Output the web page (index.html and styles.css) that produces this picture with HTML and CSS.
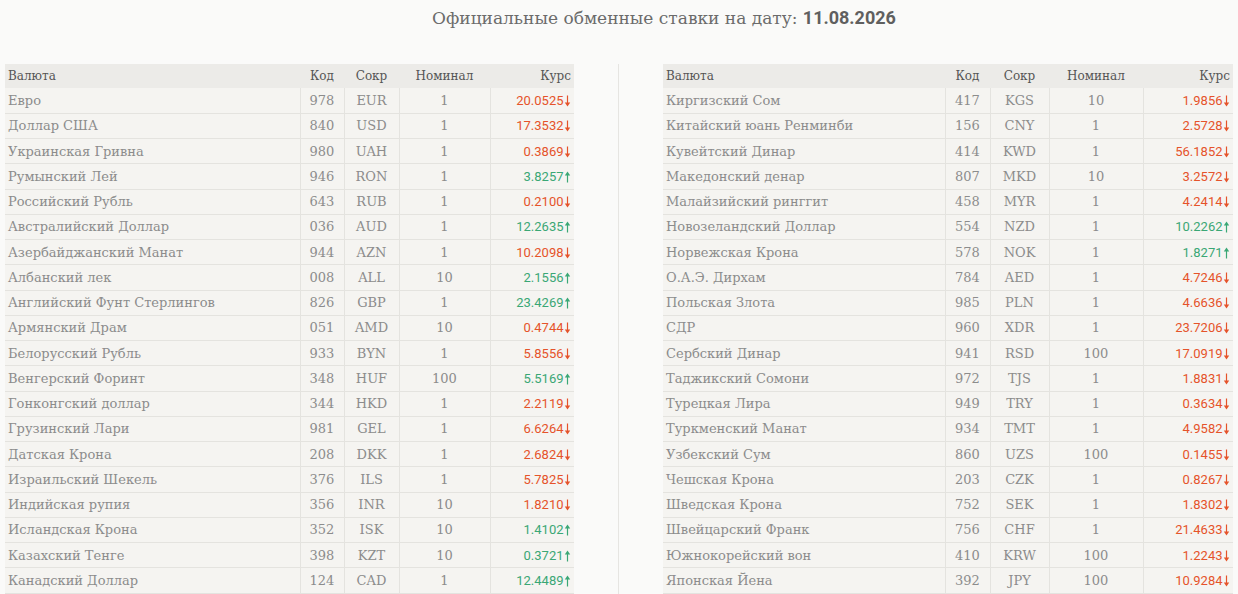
FILE: index.html
```html
<!DOCTYPE html>
<html lang="ru">
<head>
<meta charset="utf-8">
<title>Курсы валют</title>
<link rel="stylesheet" href="styles.css">
</head>
<body>
<svg class="defs" width="0" height="0" aria-hidden="true">
  <defs>
    <symbol id="dn" viewBox="0 0 7 12"><path d="M3.5 0.5V9" stroke="currentColor" stroke-width="1.2" fill="none"/><path d="M0.8 7.6H6.2L3.5 11.6Z" fill="currentColor"/></symbol>
    <symbol id="upa" viewBox="0 0 7 12"><path d="M3.5 3V11.5" stroke="currentColor" stroke-width="1.2" fill="none"/><path d="M0.8 4.4H6.2L3.5 0.4Z" fill="currentColor"/></symbol>
  </defs>
</svg>
<div class="page">
  <h1 class="title">Официальные обменные ставки на дату: <b>11.08.2026</b></h1>
  <div class="columns">
    <div class="col col-left">
      <table class="rates">
        <colgroup><col class="c-name-l"><col class="c-code-l"><col class="c-abbr-l"><col class="c-nom-l"><col class="c-rate-l"></colgroup>
        <thead><tr><th class="name">Валюта</th><th>Код</th><th>Сокр</th><th>Номинал</th><th class="rate">Курс</th></tr></thead>
        <tbody>
          <tr><td class="name">Евро</td><td>978</td><td>EUR</td><td>1</td><td class="rate down">20.0525<svg class="ar"><use href="#dn"/></svg></td></tr>
          <tr><td class="name">Доллар США</td><td>840</td><td>USD</td><td>1</td><td class="rate down">17.3532<svg class="ar"><use href="#dn"/></svg></td></tr>
          <tr><td class="name">Украинская Гривна</td><td>980</td><td>UAH</td><td>1</td><td class="rate down">0.3869<svg class="ar"><use href="#dn"/></svg></td></tr>
          <tr><td class="name">Румынский Лей</td><td>946</td><td>RON</td><td>1</td><td class="rate up">3.8257<svg class="ar"><use href="#upa"/></svg></td></tr>
          <tr><td class="name">Российский Рубль</td><td>643</td><td>RUB</td><td>1</td><td class="rate down">0.2100<svg class="ar"><use href="#dn"/></svg></td></tr>
          <tr><td class="name">Австралийский Доллар</td><td>036</td><td>AUD</td><td>1</td><td class="rate up">12.2635<svg class="ar"><use href="#upa"/></svg></td></tr>
          <tr><td class="name">Азербайджанский Манат</td><td>944</td><td>AZN</td><td>1</td><td class="rate down">10.2098<svg class="ar"><use href="#dn"/></svg></td></tr>
          <tr><td class="name">Албанский лек</td><td>008</td><td>ALL</td><td>10</td><td class="rate up">2.1556<svg class="ar"><use href="#upa"/></svg></td></tr>
          <tr><td class="name">Английский Фунт Стерлингов</td><td>826</td><td>GBP</td><td>1</td><td class="rate up">23.4269<svg class="ar"><use href="#upa"/></svg></td></tr>
          <tr><td class="name">Армянский Драм</td><td>051</td><td>AMD</td><td>10</td><td class="rate down">0.4744<svg class="ar"><use href="#dn"/></svg></td></tr>
          <tr><td class="name">Белорусский Рубль</td><td>933</td><td>BYN</td><td>1</td><td class="rate down">5.8556<svg class="ar"><use href="#dn"/></svg></td></tr>
          <tr><td class="name">Венгерский Форинт</td><td>348</td><td>HUF</td><td>100</td><td class="rate up">5.5169<svg class="ar"><use href="#upa"/></svg></td></tr>
          <tr><td class="name">Гонконгский доллар</td><td>344</td><td>HKD</td><td>1</td><td class="rate down">2.2119<svg class="ar"><use href="#dn"/></svg></td></tr>
          <tr><td class="name">Грузинский Лари</td><td>981</td><td>GEL</td><td>1</td><td class="rate down">6.6264<svg class="ar"><use href="#dn"/></svg></td></tr>
          <tr><td class="name">Датская Крона</td><td>208</td><td>DKK</td><td>1</td><td class="rate down">2.6824<svg class="ar"><use href="#dn"/></svg></td></tr>
          <tr><td class="name">Израильский Шекель</td><td>376</td><td>ILS</td><td>1</td><td class="rate down">5.7825<svg class="ar"><use href="#dn"/></svg></td></tr>
          <tr><td class="name">Индийская рупия</td><td>356</td><td>INR</td><td>10</td><td class="rate down">1.8210<svg class="ar"><use href="#dn"/></svg></td></tr>
          <tr><td class="name">Исландская Крона</td><td>352</td><td>ISK</td><td>10</td><td class="rate up">1.4102<svg class="ar"><use href="#upa"/></svg></td></tr>
          <tr><td class="name">Казахский Тенге</td><td>398</td><td>KZT</td><td>10</td><td class="rate up">0.3721<svg class="ar"><use href="#upa"/></svg></td></tr>
          <tr><td class="name">Канадский Доллар</td><td>124</td><td>CAD</td><td>1</td><td class="rate up">12.4489<svg class="ar"><use href="#upa"/></svg></td></tr>
        </tbody>
      </table>
    </div>
    <div class="col col-right">
      <table class="rates">
        <colgroup><col class="c-name-r"><col class="c-code-r"><col class="c-abbr-r"><col class="c-nom-r"><col class="c-rate-r"></colgroup>
        <thead><tr><th class="name">Валюта</th><th>Код</th><th>Сокр</th><th>Номинал</th><th class="rate">Курс</th></tr></thead>
        <tbody>
          <tr><td class="name">Киргизский Сом</td><td>417</td><td>KGS</td><td>10</td><td class="rate down">1.9856<svg class="ar"><use href="#dn"/></svg></td></tr>
          <tr><td class="name">Китайский юань Ренминби</td><td>156</td><td>CNY</td><td>1</td><td class="rate down">2.5728<svg class="ar"><use href="#dn"/></svg></td></tr>
          <tr><td class="name">Кувейтский Динар</td><td>414</td><td>KWD</td><td>1</td><td class="rate down">56.1852<svg class="ar"><use href="#dn"/></svg></td></tr>
          <tr><td class="name">Македонский денар</td><td>807</td><td>MKD</td><td>10</td><td class="rate down">3.2572<svg class="ar"><use href="#dn"/></svg></td></tr>
          <tr><td class="name">Малайзийский ринггит</td><td>458</td><td>MYR</td><td>1</td><td class="rate down">4.2414<svg class="ar"><use href="#dn"/></svg></td></tr>
          <tr><td class="name">Новозеландский Доллар</td><td>554</td><td>NZD</td><td>1</td><td class="rate up">10.2262<svg class="ar"><use href="#upa"/></svg></td></tr>
          <tr><td class="name">Норвежская Крона</td><td>578</td><td>NOK</td><td>1</td><td class="rate up">1.8271<svg class="ar"><use href="#upa"/></svg></td></tr>
          <tr><td class="name">О.А.Э. Дирхам</td><td>784</td><td>AED</td><td>1</td><td class="rate down">4.7246<svg class="ar"><use href="#dn"/></svg></td></tr>
          <tr><td class="name">Польская Злота</td><td>985</td><td>PLN</td><td>1</td><td class="rate down">4.6636<svg class="ar"><use href="#dn"/></svg></td></tr>
          <tr><td class="name">СДР</td><td>960</td><td>XDR</td><td>1</td><td class="rate down">23.7206<svg class="ar"><use href="#dn"/></svg></td></tr>
          <tr><td class="name">Сербский Динар</td><td>941</td><td>RSD</td><td>100</td><td class="rate down">17.0919<svg class="ar"><use href="#dn"/></svg></td></tr>
          <tr><td class="name">Таджикский Сомони</td><td>972</td><td>TJS</td><td>1</td><td class="rate down">1.8831<svg class="ar"><use href="#dn"/></svg></td></tr>
          <tr><td class="name">Турецкая Лира</td><td>949</td><td>TRY</td><td>1</td><td class="rate down">0.3634<svg class="ar"><use href="#dn"/></svg></td></tr>
          <tr><td class="name">Туркменский Манат</td><td>934</td><td>TMT</td><td>1</td><td class="rate down">4.9582<svg class="ar"><use href="#dn"/></svg></td></tr>
          <tr><td class="name">Узбекский Сум</td><td>860</td><td>UZS</td><td>100</td><td class="rate down">0.1455<svg class="ar"><use href="#dn"/></svg></td></tr>
          <tr><td class="name">Чешская Крона</td><td>203</td><td>CZK</td><td>1</td><td class="rate down">0.8267<svg class="ar"><use href="#dn"/></svg></td></tr>
          <tr><td class="name">Шведская Крона</td><td>752</td><td>SEK</td><td>1</td><td class="rate down">1.8302<svg class="ar"><use href="#dn"/></svg></td></tr>
          <tr><td class="name">Швейцарский Франк</td><td>756</td><td>CHF</td><td>1</td><td class="rate down">21.4633<svg class="ar"><use href="#dn"/></svg></td></tr>
          <tr><td class="name">Южнокорейский вон</td><td>410</td><td>KRW</td><td>100</td><td class="rate down">1.2243<svg class="ar"><use href="#dn"/></svg></td></tr>
          <tr><td class="name">Японская Йена</td><td>392</td><td>JPY</td><td>100</td><td class="rate down">10.9284<svg class="ar"><use href="#dn"/></svg></td></tr>
        </tbody>
      </table>
    </div>
  </div>
</div>
</body>
</html>
```

FILE: styles.css
```css
html, body {
  margin: 0;
  padding: 0;
  background: #fafaf9;
}
body {
  font-family: "DejaVu Serif", "Liberation Serif", serif;
  color: #8c8c8c;
  overflow: hidden;
}
.defs {
  position: absolute;
  width: 0;
  height: 0;
}
.page {
  width: 1238px;
  height: 594px;
  overflow: hidden;
}
.title {
  margin: 0;
  padding-top: 8px;
  padding-left: 90px;
  height: 64px;
  box-sizing: border-box;
  text-align: center;
  font-weight: normal;
  font-size: 17px;
  line-height: 20px;
  color: #6b6b6b;
}
.title b {
  font-family: Roboto, "Liberation Sans", sans-serif;
  font-weight: 700;
  font-size: 18px;
  color: #5f5f5f;
}
.columns {
  display: flex;
  padding-left: 5px;
}
.col-left {
  width: 613px;
  padding-right: 44px;
  box-sizing: border-box;
}
.col-right {
  width: 614px;
  padding-left: 44px;
  border-left: 1px solid #e6e5e2;
  box-sizing: border-box;
}
.rates {
  width: 100%;
  border-collapse: collapse;
  table-layout: fixed;
  font-size: 13px;
}
.c-name-l { width: 295px; }
.c-code-l { width: 44px; }
.c-abbr-l { width: 55px; }
.c-nom-l  { width: 91px; }
.c-rate-l { width: 84px; }
.c-name-r { width: 282px; }
.c-code-r { width: 45px; }
.c-abbr-r { width: 59px; }
.c-nom-r  { width: 94px; }
.c-rate-r { width: 90px; }
.rates th {
  background: #ecebe8;
  color: #555;
  font-weight: normal;
  font-size: 12px;
  height: 24px;
  padding: 0 3px;
  text-align: center;
  white-space: nowrap;
}
.rates td {
  background: #f5f4f1;
  height: 25.25px;
  padding: 0 3px;
  text-align: center;
  white-space: nowrap;
  border-bottom: 1px solid #e4e3df;
  border-left: 1px solid #e4e3df;
  box-sizing: border-box;
}
.rates th.name, .rates td.name {
  text-align: left;
  border-left: none;
}
.rates th.rate, .rates td.rate {
  text-align: right;
}
.rates td.rate {
  font-family: Roboto, "Liberation Sans", sans-serif;
  font-size: 13px;
}
.ar {
  width: 7px;
  height: 12px;
  margin-left: 0.5px;
  vertical-align: -2px;
}
.down { color: #e5532a; }
.up { color: #3aa775; }
```
